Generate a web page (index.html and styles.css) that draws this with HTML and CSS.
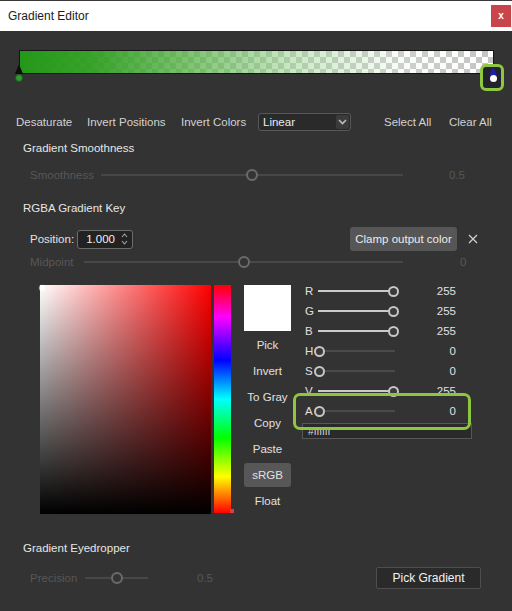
FILE: index.html
```html
<!DOCTYPE html>
<html>
<head>
<meta charset="utf-8">
<title>Gradient Editor</title>
<link rel="stylesheet" href="styles.css">
</head>
<body>
<div class="window">
  <div class="titlebar">
    <span class="title">Gradient Editor</span>
    <span class="close">x</span>
  </div>

  <div class="grad-section">
    <div class="grad-bar"></div>
    <div class="hl hl-stop"></div>
    <span class="stop-tri stop-tri-left"></span>
    <span class="stop-dot stop-dot-left"></span>
    <span class="stop-tri stop-tri-right"></span>
    <span class="stop-dot stop-dot-right"></span>
  </div>

  <div class="toolbar">
    <span class="tb tb-desat">Desaturate</span>
    <span class="tb tb-invpos">Invert Positions</span>
    <span class="tb tb-invcol">Invert Colors</span>
    <div class="dropdown">
      <span>Linear</span>
      <span class="dd-arrow">
        <svg width="9" height="6" viewBox="0 0 9 6"><path d="M1 1 L4.5 4.5 L8 1" fill="none" stroke="#bdbdbd" stroke-width="1.6"/></svg>
      </span>
    </div>
    <span class="tb tb-selall">Select All</span>
    <span class="tb tb-clear">Clear All</span>
  </div>

  <div class="section-title st-smooth">Gradient Smoothness</div>
  <div class="drow drow-smooth">
    <span class="dlabel dl-smooth">Smoothness</span>
    <div class="dtrack dt-smooth" style="--v:0.5"><span class="dknob"></span></div>
    <span class="dval dv-smooth">0.5</span>
  </div>

  <div class="section-title st-key">RGBA Gradient Key</div>
  <div class="posrow">
    <span class="poslabel">Position:</span>
    <div class="spinner">
      <span class="spin-val">1.000</span>
      <svg class="spin-arrows" width="7" height="14" viewBox="0 0 7 14"><path d="M1 5 L3.5 2 L6 5 M1 9 L3.5 12 L6 9" fill="none" stroke="#a8a8a8" stroke-width="1.1"/></svg>
    </div>
    <span class="clamp">Clamp output color</span>
    <svg class="xicon" width="10" height="10" viewBox="0 0 10 10"><path d="M1 1 L9 9 M9 1 L1 9" stroke="#cfcfcf" stroke-width="1.3"/></svg>
  </div>
  <div class="drow drow-mid">
    <span class="dlabel dl-mid">Midpoint</span>
    <div class="dtrack dt-mid" style="--v:0.5"><span class="dknob"></span></div>
    <span class="dval dv-mid">0</span>
  </div>

  <div class="picker">
    <div class="sv"><span class="sv-dot"></span></div>
    <div class="hue"><span class="hue-mark"></span></div>
    <div class="tools">
      <div class="swatch"></div>
      <span class="tbtn">Pick</span>
      <span class="tbtn">Invert</span>
      <span class="tbtn">To Gray</span>
      <span class="tbtn">Copy</span>
      <span class="tbtn">Paste</span>
      <span class="tbtn tbtn-active">sRGB</span>
      <span class="tbtn">Float</span>
    </div>
    <div class="sliders">
      <div class="srow"><span class="sl">R</span><div class="strack" style="--v:1"><span class="sknob"></span></div><span class="sval">255</span></div>
      <div class="srow"><span class="sl">G</span><div class="strack" style="--v:1"><span class="sknob"></span></div><span class="sval">255</span></div>
      <div class="srow"><span class="sl">B</span><div class="strack" style="--v:1"><span class="sknob"></span></div><span class="sval">255</span></div>
      <div class="srow"><span class="sl">H</span><div class="strack" style="--v:0"><span class="sknob"></span></div><span class="sval">0</span></div>
      <div class="srow"><span class="sl">S</span><div class="strack" style="--v:0"><span class="sknob"></span></div><span class="sval">0</span></div>
      <div class="srow"><span class="sl">V</span><div class="strack" style="--v:1"><span class="sknob"></span></div><span class="sval">255</span></div>
      <div class="srow"><span class="sl">A</span><div class="strack" style="--v:0"><span class="sknob"></span></div><span class="sval">0</span></div>
      <div class="hex">#ffffff</div>
    </div>
    <div class="hl hl-alpha"></div>
  </div>

  <div class="section-title st-eye">Gradient Eyedropper</div>
  <div class="drow drow-prec">
    <span class="dlabel dl-prec">Precision</span>
    <div class="dtrack dt-prec" style="--v:0.5"><span class="dknob"></span></div>
    <span class="dval dv-prec">0.5</span>
    <span class="pickgrad">Pick Gradient</span>
  </div>
</div>
</body>
</html>
```

FILE: styles.css
```css
* { box-sizing: border-box; margin: 0; padding: 0; }
html, body { width: 512px; height: 611px; overflow: hidden; }
body {
  background: #333333;
  font-family: "Liberation Sans", Arial, sans-serif;
  font-size: 11.5px;
  color: #d4d4d4;
}
.window { width: 512px; height: 611px; }

/* title bar */
.titlebar {
  height: 31px;
  background: #ffffff;
  border-top: 1px solid #3a3a3a;
  display: flex;
  align-items: center;
  justify-content: space-between;
  padding: 0 1px 0 8px;
}
.title { color: #1b1b1b; font-size: 12px; }
.close {
  width: 20px;
  height: 22px;
  background: #c8464b;
  color: #fff;
  font-size: 10px;
  font-weight: bold;
  display: flex;
  align-items: center;
  justify-content: center;
  padding-bottom: 2px;
}

/* gradient */
.grad-section {
  position: relative;
  height: 82px;
  padding: 19px 0 0 19px;
}
.grad-bar {
  width: 475px;
  height: 24px;
  border: 1px solid #141414;
  background:
    linear-gradient(to right,
      rgba(36, 152, 24, 1) 0%,
      rgba(46, 158, 32, 0.95) 15%,
      rgba(90, 180, 75, 0.8) 35%,
      rgba(160, 215, 150, 0.55) 58%,
      rgba(230, 245, 228, 0.25) 80%,
      rgba(255, 255, 255, 0) 100%),
    repeating-conic-gradient(#c4c4c4 0 25%, #ffffff 0 50%) 0 0 / 12px 12px;
}
.stop-tri {
  position: absolute;
  width: 0;
  height: 0;
  border-left: 4px solid transparent;
  border-right: 4px solid transparent;
}
.stop-tri-left { left: 15px; top: 33px; border-bottom: 10px solid #0e0e0e; }
.stop-tri-right { left: 489px; top: 36px; border-bottom: 8px solid #1e1ea8; z-index: 2; }
.stop-dot {
  position: absolute;
  border-radius: 50%;
}
.stop-dot-left {
  left: 15px; top: 43px; width: 8px; height: 8px;
  background: #2f9a2f; border: 1px solid #1d5a1d;
}
.stop-dot-right {
  left: 489.5px; top: 43.5px; width: 7px; height: 7px;
  background: #ffffff; z-index: 2;
}
.hl {
  position: absolute;
  border: 3px solid #8fc640;
  border-radius: 6px;
}
.hl-stop {
  left: 480px; top: 33px; width: 24px; height: 27px;
  background: #22222c;
  z-index: 1;
}

/* toolbar */
.toolbar {
  height: 18px;
  display: flex;
  align-items: center;
  padding-left: 16px;
  color: #d2d2d2;
}
.tb { flex: none; white-space: nowrap; }
.tb-desat { width: 71px; }
.tb-invpos { width: 94px; }
.tb-invcol { width: 77px; }
.dropdown {
  flex: none;
  width: 93px;
  height: 18px;
  border: 1px solid #575757;
  border-radius: 3px;
  background: #2a2a2a;
  display: flex;
  align-items: center;
  justify-content: space-between;
  padding-left: 4px;
  color: #ececec;
  margin-right: 33px;
}
.dd-arrow {
  width: 13px;
  height: 14px;
  margin-right: 1px;
  background: #3b3b3b;
  border-radius: 2px;
  display: flex;
  align-items: center;
  justify-content: center;
}
.tb-selall { width: 65px; }

/* section titles */
.section-title {
  height: 18px;
  display: flex;
  align-items: center;
  padding-left: 23px;
  color: #e6e6e6;
}
.st-smooth { margin-top: 8px; }
.st-key { margin-top: 15px; }
.st-eye { margin-top: 25px; }

/* disabled slider rows */
.drow {
  display: flex;
  align-items: center;
  padding-left: 30px;
  color: #575757;
}
.drow-smooth { height: 18px; margin-top: 9px; }
.drow-mid { height: 16px; margin-top: 3px; }
.drow-prec { height: 23px; margin-top: 9px; padding-right: 31px; }
.dlabel { flex: none; }
.dl-smooth { width: 71px; }
.dl-mid { width: 54px; }
.dl-prec { width: 55px; }
.dtrack {
  position: relative;
  flex: none;
  height: 2px;
  background: #474747;
}
.dt-smooth { width: 302px; }
.dt-mid { width: 319px; }
.dt-prec { width: 63px; }
.dknob {
  position: absolute;
  top: 50%;
  left: calc(var(--v) * 100%);
  width: 12px;
  height: 12px;
  border: 2.5px solid #6b6b6b;
  border-radius: 50%;
  background: #343434;
  transform: translate(-50%, -50%);
}
.dval { flex: none; }
.dv-smooth { margin-left: 46px; }
.dv-mid { margin-left: 57px; }
.dv-prec { margin-left: 49px; }

/* position row */
.posrow {
  height: 24px;
  margin-top: 10px;
  display: flex;
  align-items: center;
  padding: 0 34px 0 30px;
  color: #e2e2e2;
}
.poslabel { width: 47px; flex: none; }
.spinner {
  width: 56px;
  height: 19px;
  border: 1px solid #6c6c6c;
  border-radius: 3px;
  background: #222222;
  display: flex;
  align-items: center;
  justify-content: flex-end;
  padding-right: 4px;
  color: #f0f0f0;
}
.spin-val { margin-right: 6px; }
.clamp {
  margin-left: auto;
  width: 107px;
  height: 24px;
  background: #565656;
  border-radius: 3px;
  display: flex;
  align-items: center;
  justify-content: center;
  color: #ececec;
  white-space: nowrap;
}
.xicon { margin-left: 11px; }

/* picker */
.picker {
  position: relative;
  display: flex;
  align-items: flex-start;
  height: 229px;
  margin-top: 15px;
  padding-left: 40px;
}
.sv {
  position: relative;
  width: 171px;
  height: 229px;
  background:
    linear-gradient(to top, #000 0%, rgba(0, 0, 0, 0) 100%),
    linear-gradient(to right, #ffffff 0%, #ff0000 100%);
}
.sv-dot {
  position: absolute;
  left: 0; top: 1px;
  width: 4px; height: 4px;
  border-radius: 50%;
  background: #fff;
  box-shadow: 0 0 1px 1px rgba(255,255,255,0.7);
}
.hue {
  position: relative;
  width: 17px;
  height: 228px;
  margin-left: 3px;
  background: linear-gradient(to bottom,
    #ff0000 0%, #ff00ff 14%, #0000ff 33%, #00ffff 50%,
    #00ff00 67%, #ffff00 84%, #ff0000 100%);
}
.hue-mark {
  position: absolute;
  right: -3px; bottom: 0;
  width: 4px; height: 4px;
  background: #e23a3a;
}
.tools {
  width: 47px;
  margin-left: 13px;
  display: flex;
  flex-direction: column;
  color: #e0e0e0;
}
.swatch { width: 47px; height: 46px; background: #ffffff; }
.tbtn {
  height: 24px;
  margin-top: 2px;
  display: flex;
  align-items: center;
  justify-content: center;
  border-radius: 3px;
  white-space: nowrap;
}
.tbtn-active { background: #575757; }

.sliders {
  width: 170px;
  margin-left: 11px;
  margin-top: -4px;
}
.srow {
  height: 20px;
  display: flex;
  align-items: center;
  padding-left: 3px;
  color: #e0e0e0;
}
.sl { width: 9px; flex: none; }
.strack {
  position: relative;
  width: 84px;
  height: 12px;
  flex: none;
}
.strack::before {
  content: "";
  position: absolute;
  left: 4px; right: 3px; top: 5px;
  height: 2px;
  background: linear-gradient(to right, #cacaca calc(var(--v) * 100%), #4a4a4a 0);
}
.sknob {
  position: absolute;
  top: 1px;
  left: calc(var(--v) * 74px);
  width: 11px;
  height: 11px;
  border: 2.5px solid #c6c6c6;
  border-radius: 50%;
  background: #3a3a3a;
}
.sval { width: 58px; flex: none; text-align: right; }
.hex {
  margin-top: 2px;
  height: 16px;
  border: 1px solid #575757;
  background: #2a2a2a;
  padding-left: 5px;
  font-size: 10.5px;
  line-height: 14px;
  color: #d8d8d8;
}
.hl-alpha {
  left: 293px; top: 108px;
  width: 178px; height: 37px;
  border-radius: 7px;
}

/* eyedropper */
.pickgrad {
  margin-left: auto;
  width: 105px;
  height: 22px;
  border: 1px solid #4e4e4e;
  border-radius: 2px;
  background: #2a2a2a;
  color: #f2f2f2;
  font-size: 12px;
  display: flex;
  align-items: center;
  justify-content: center;
}
```
